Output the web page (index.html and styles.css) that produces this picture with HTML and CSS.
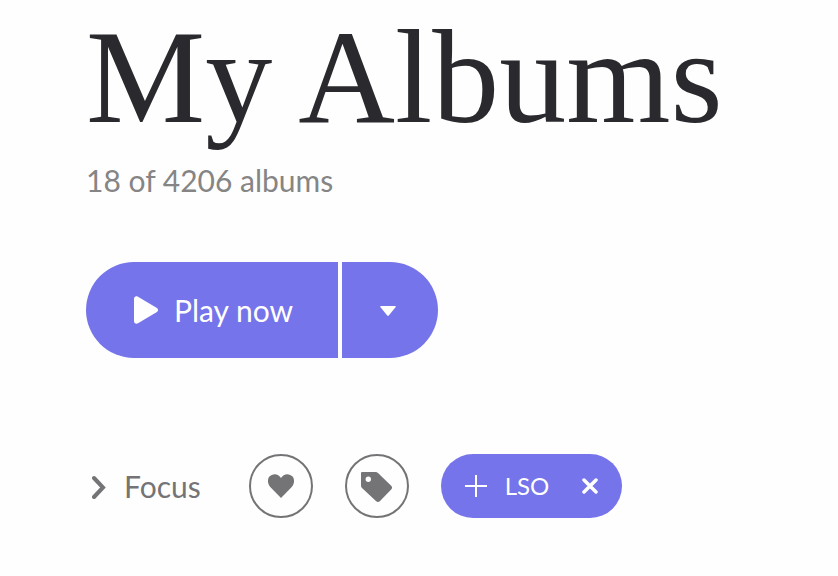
FILE: index.html
```html
<!DOCTYPE html>
<html lang="en">
<head>
<meta charset="UTF-8" />
<meta name="viewport" content="width=device-width, initial-scale=1" />
<title>My Albums</title>
<link rel="stylesheet" href="styles.css">
</head>
<body>

<main class="page">
  <header>
    <h1>My Albums</h1>
    <p class="count">18 of 4206 albums</p>
  </header>

  <div class="play-group">
    <button type="button" class="play-button">
      <svg width="24" height="28" viewBox="0 0 24 28" aria-hidden="true">
        <path d="M0 3C0 .6 2 -.4 4 .7L22.5 11.7C24.5 12.9 24.5 15.1 22.5 16.3L4 27.3C2 28.4 0 27.400 0 25Z" fill="currentColor"/>
      </svg>
      <span>Play now</span>
    </button>
    <button type="button" class="play-menu" aria-label="More play options">
      <svg width="16" height="12" viewBox="0 0 16 12" aria-hidden="true">
        <path d="M1 2H15Q16.400 2 15.500 3.200L9 11.300Q8 12.500 7 11.300L.5 3.200Q-.4 2 1 2Z" fill="currentColor"/>
      </svg>
    </button>
  </div>

  <div class="filters">
    <button type="button" class="focus-button">
      <svg width="14" height="26" viewBox="0 0 14 26" aria-hidden="true">
        <path d="M2 5L11 14.500L2 24" fill="none" stroke="currentColor" stroke-width="4" stroke-linecap="round"/>
      </svg>
      <span>Focus</span>
    </button>

    <button type="button" class="round-button" aria-label="Favorites">
      <svg width="26" height="24" viewBox="0 0 26 24" aria-hidden="true">
        <path d="M13 24L2.500 13.200C-.6 10-.8 5.400 1.400 2.600C4.300-.9 10.400-.9 13 4C15.600-.9 21.700-.9 24.600 2.600C26.800 5.400 26.600 10 23.500 13.200Z" fill="currentColor"/>
      </svg>
    </button>

    <button type="button" class="round-button" aria-label="Tags">
      <svg width="32" height="32" viewBox="0 0 32 32" aria-hidden="true">
        <path d="M1 2H14.500Q16 2 17 3L30.200 15.800Q32 17.600 30.200 19.400L18.800 31.200Q17 32.600 15.200 31.200L1 18Q0 17 0 15.500V3Q0 2 1 2ZM7.300 6.600A2.700 2.700 0 1 0 7.300 12A2.700 2.700 0 1 0 7.300 6.600Z" fill="currentColor" fill-rule="evenodd"/>
      </svg>
    </button>

    <div class="chip">
      <button type="button" class="chip-label">
        <svg width="22" height="22" viewBox="0 0 22 22" aria-hidden="true">
          <path d="M11 0V22M0 11H22" stroke="currentColor" stroke-width="2"/>
        </svg>
        <span>LSO</span>
      </button>
      <button type="button" class="chip-remove" aria-label="Remove LSO">
        <svg width="18" height="16" viewBox="0 0 18 16" aria-hidden="true">
          <path d="M3 2L15 14M15 2L3 14" stroke="currentColor" stroke-width="3.500" stroke-linecap="round"/>
        </svg>
      </button>
    </div>
  </div>
</main>

</body>
</html>
```

FILE: styles.css
```css
body {
  margin: 0;
  background-color: #fefefe;
  color: #747476;
  font-family: Lato, sans-serif;
  font-size: 30px;
  line-height: 36px;
}
.page {
  padding: 6px 86px 56px;
}
h1 {
  margin: 0;
  color: #2a2a2e;
  font-family: "Liberation Serif", serif;
  font-size: 134px;
  font-weight: 400;
  line-height: 142px;
}
.count {
  margin: 14px 0 0;
  color: #858585;
}
button {
  display: flex;
  align-items: center;
  padding: 0;
  border: none;
  background: none;
  color: inherit;
  font: inherit;
  cursor: pointer;
}
svg {
  display: block;
  flex: none;
}
.play-group {
  display: flex;
  gap: 4px;
  margin-top: 64px;
}
.play-button,
.play-menu {
  height: 96px;
  background-color: #7574ea;
  color: #fff;
}
.play-button {
  gap: 16px;
  padding: 0 45px 0 48px;
  border-radius: 48px 0 0 48px;
}
.play-menu {
  justify-content: center;
  width: 96px;
  padding-right: 4px;
  border-radius: 0 48px 48px 0;
}
.filters {
  display: flex;
  flex-wrap: wrap;
  gap: 32px;
  margin-top: 96px;
}
.focus-button {
  gap: 18px;
  margin-right: 16px;
  padding-left: 6px;
}
.round-button {
  justify-content: center;
  width: 64px;
  height: 64px;
  border: 2px solid #747476;
  border-radius: 50%;
}
.chip {
  display: flex;
  height: 64px;
  border-radius: 32px;
  background-color: #7574ea;
  color: #fff;
  font-size: 24px;
}
.chip-label {
  gap: 18px;
  padding-left: 24px;
}
.chip-remove {
  padding: 0 23px 0 32px;
}
```
